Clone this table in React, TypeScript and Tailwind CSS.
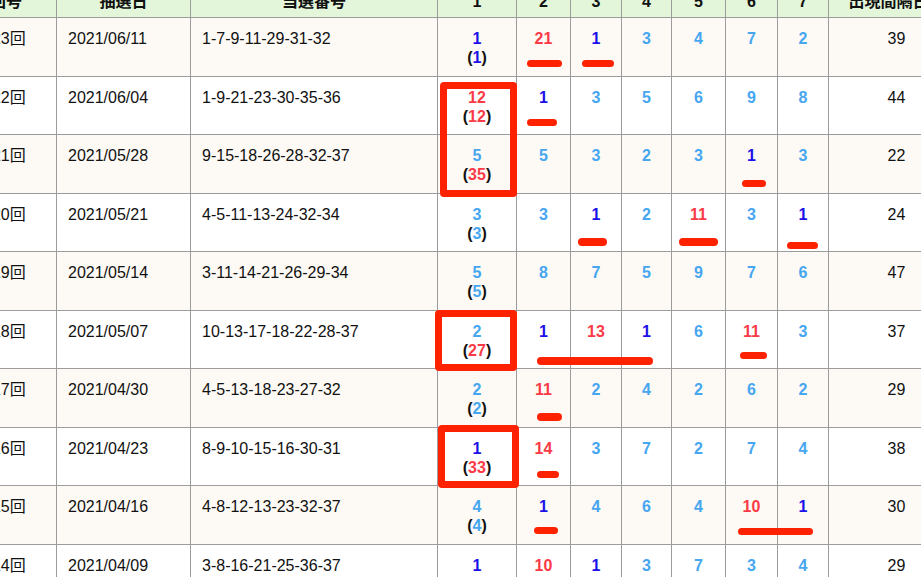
type Row = {
  no: number
  date: string
  nums: string
  first: [number, number]
  rest: number[]
  gap: number
}

const rows: Row[] = [
  { no: 423, date: '2021/06/11', nums: '1-7-9-11-29-31-32', first: [1, 1], rest: [21, 1, 3, 4, 7, 2], gap: 39 },
  { no: 422, date: '2021/06/04', nums: '1-9-21-23-30-35-36', first: [12, 12], rest: [1, 3, 5, 6, 9, 8], gap: 44 },
  { no: 421, date: '2021/05/28', nums: '9-15-18-26-28-32-37', first: [5, 35], rest: [5, 3, 2, 3, 1, 3], gap: 22 },
  { no: 420, date: '2021/05/21', nums: '4-5-11-13-24-32-34', first: [3, 3], rest: [3, 1, 2, 11, 3, 1], gap: 24 },
  { no: 419, date: '2021/05/14', nums: '3-11-14-21-26-29-34', first: [5, 5], rest: [8, 7, 5, 9, 7, 6], gap: 47 },
  { no: 418, date: '2021/05/07', nums: '10-13-17-18-22-28-37', first: [2, 27], rest: [1, 13, 1, 6, 11, 3], gap: 37 },
  { no: 417, date: '2021/04/30', nums: '4-5-13-18-23-27-32', first: [2, 2], rest: [11, 2, 4, 2, 6, 2], gap: 29 },
  { no: 416, date: '2021/04/23', nums: '8-9-10-15-16-30-31', first: [1, 33], rest: [14, 3, 7, 2, 7, 4], gap: 38 },
  { no: 415, date: '2021/04/16', nums: '4-8-12-13-23-32-37', first: [4, 4], rest: [1, 4, 6, 4, 10, 1], gap: 30 },
  { no: 414, date: '2021/04/09', nums: '3-8-16-21-25-36-37', first: [1, 1], rest: [10, 1, 3, 7, 3, 4], gap: 29 },
]

// red marker lines drawn over the table: [left, top, width, height]
const bars: [number, number, number, number][] = [
  [527, 60, 35, 7],
  [582, 60, 32, 7],
  [527, 119, 30, 7],
  [742, 180, 24, 7],
  [578, 238, 29, 8],
  [679, 238, 39, 8],
  [787, 242, 31, 7],
  [537, 357, 116, 8],
  [740, 352, 27, 7],
  [537, 413, 25, 8],
  [537, 471, 22, 7],
  [534, 527, 24, 7],
  [738, 528, 75, 7],
]

const boxes: [number, number, number, number][] = [
  [440, 82, 77, 115],
  [435, 310, 82, 61],
  [438, 425, 81, 63],
]

function tone(v: number) {
  if (v === 1) return 'text-[#1c10e8]'
  if (v >= 10) return 'text-[#fb3a47]'
  return 'text-[#46a6f0]'
}

const cols = 'grid grid-cols-[101px_134px_247px_79px_54px_51px_50px_54px_52px_51px_136px]'
const cell = 'border-r border-b border-[#9c9c9c]'

export default function App() {
  return (
    <div
      className="relative h-[577px] w-[921px] overflow-hidden bg-white text-[16px] text-[#111]"
      style={{ fontFamily: '"Liberation Sans", "Noto Sans CJK JP", sans-serif' }}
    >
      <div className="-mt-[14px] -ml-[44px] w-max">
        <div className={`${cols} h-[32px] bg-[#e3f6da] font-bold`}>
          {['回号', '抽選日', '当選番号', '1', '2', '3', '4', '5', '6', '7', '出現間隔日数'].map((h) => (
            <div key={h} className={`${cell} flex items-center justify-center leading-none`}>
              {h}
            </div>
          ))}
        </div>
        {rows.map((r, i) => (
          <div
            key={r.no}
            className={`${cols} h-[58.5px] leading-[19px] ${i % 2 === 0 ? 'bg-[#fdfaf5]' : 'bg-white'}`}
          >
            <div className={`${cell} pt-[11px] pl-[11px]`}>第{r.no}回</div>
            <div className={`${cell} pt-[11px] pl-[11px]`}>{r.date}</div>
            <div className={`${cell} pt-[11px] pl-[11px]`}>{r.nums}</div>
            <div className={`${cell} pt-[11px] text-center font-bold`}>
              <div className={tone(r.first[0])}>{r.first[0]}</div>
              <div>
                (<span className={tone(r.first[1])}>{r.first[1]}</span>)
              </div>
            </div>
            {r.rest.map((v, j) => (
              <div key={j} className={`${cell} pt-[11px] text-center font-bold ${tone(v)}`}>
                {v}
              </div>
            ))}
            <div className={`${cell} pt-[11px] text-center`}>{r.gap}</div>
          </div>
        ))}
      </div>

      {boxes.map(([x, y, w, h], i) => (
        <div
          key={i}
          className="absolute rounded-[4px] border-[7px] border-[#ff2200]"
          style={{ left: x, top: y, width: w, height: h }}
        />
      ))}
      {bars.map(([x, y, w, h], i) => (
        <div
          key={i}
          className="absolute rounded-full bg-[#ff2200]"
          style={{ left: x, top: y, width: w, height: h }}
        />
      ))}
    </div>
  )
}
